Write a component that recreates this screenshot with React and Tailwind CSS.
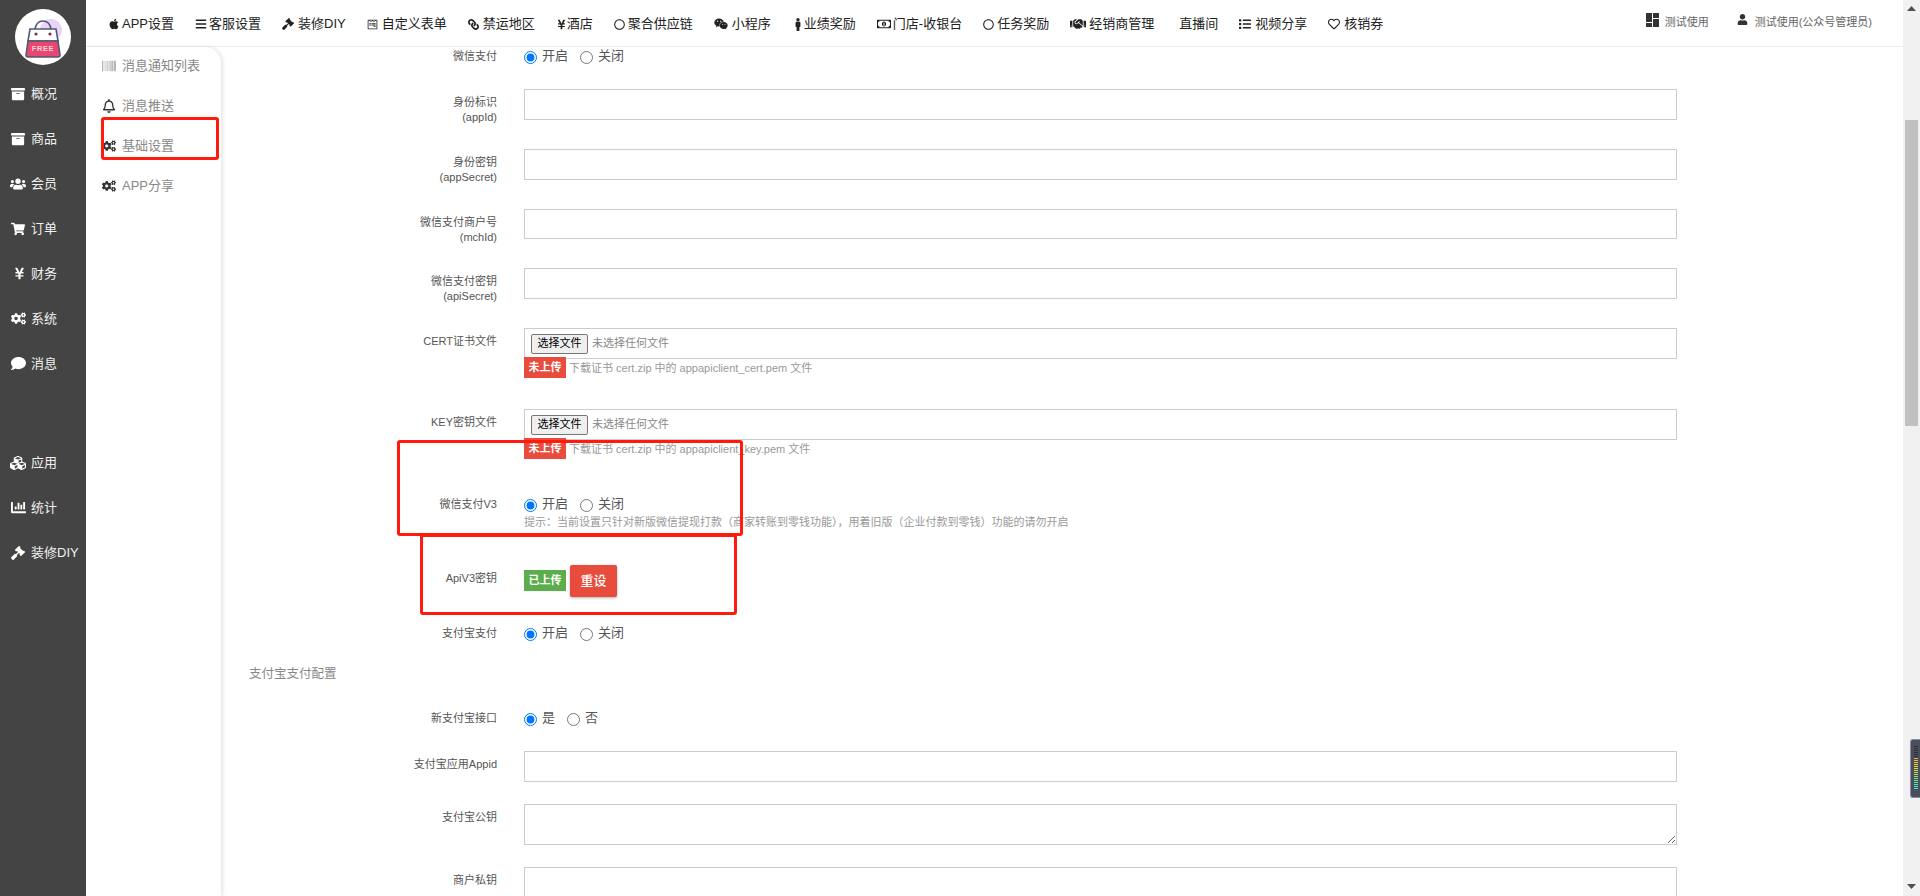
import React from "react";
import {
  FaApple, FaBars, FaGavel, FaWpforms, FaLink, FaYenSign, FaRegCircle, FaWeixin, FaMale,
  FaRegMoneyBillAlt, FaHandshake, FaList, FaRegHeart, FaUser, FaArchive, FaUsers,
  FaShoppingCart, FaCogs, FaComment, FaCubes, FaChartBar, FaBarcode, FaRegBell,
} from "react-icons/fa";

const topMenu = [
  { icon: FaApple, box: "w-[14px]", size: 12, label: "APP设置" },
  { icon: FaBars, box: "w-[14px]", size: 12, label: "客服设置" },
  { icon: FaGavel, box: "w-[16px]", size: 12, label: "装修DIY" },
  { icon: FaWpforms, box: "w-[15px]", size: 11, label: "自定义表单" },
  { icon: FaLink, box: "w-[15px]", size: 11, flip: true, label: "禁运地区" },
  { icon: FaYenSign, box: "w-[11px]", size: 11, label: "酒店" },
  { icon: FaRegCircle, box: "w-[14px]", size: 11, label: "聚合供应链" },
  { icon: FaWeixin, box: "w-[18px]", size: 14, label: "小程序" },
  { icon: FaMale, box: "w-[12px]", size: 13, label: "业绩奖励" },
  { icon: FaRegMoneyBillAlt, box: "w-[16px]", size: 14, label: "门店-收银台" },
  { icon: FaRegCircle, box: "w-[14px]", size: 11, label: "任务奖励" },
  { icon: FaHandshake, box: "w-[19px]", size: 16, label: "经销商管理" },
  { box: "w-[4px]", label: "直播间" },
  { icon: FaList, box: "w-[16px]", size: 12, label: "视频分享" },
  { icon: FaRegHeart, box: "w-[16px]", size: 12, label: "核销券" },
];

const sideMenu = [
  { icon: FaArchive, size: 14, label: "概况" },
  { icon: FaArchive, size: 14, label: "商品" },
  { icon: FaUsers, size: 16, shift: "-ml-px", label: "会员" },
  { icon: FaShoppingCart, size: 14, label: "订单" },
  { icon: FaYenSign, size: 13, shift: "ml-[2px]", label: "财务" },
  { icon: FaCogs, size: 15, label: "系统" },
  { icon: FaComment, size: 15, label: "消息" },
];

const sideMenu2 = [
  { icon: FaCubes, size: 16, shift: "-ml-px", label: "应用" },
  { icon: FaChartBar, size: 15, label: "统计" },
  { icon: FaGavel, size: 14, label: "装修DIY" },
];

const subMenu = [
  { icon: FaBarcode, label: "消息通知列表", tone: "text-[#999]" },
  { icon: FaRegBell, label: "消息推送", tone: "text-[#333]" },
  { icon: FaCogs, label: "基础设置", tone: "text-[#333]" },
  { icon: FaCogs, label: "APP分享", tone: "text-[#333]" },
];

const ledColors = [
  "#2e3038", "#2e3038", "#2e3038", "#2e3038", "#2e3038", "#2e3038",
  "#f5a623", "#f5b52a", "#f5c52f", "#eed636", "#e6df3a", "#d8e33f", "#c6e547", "#b4e650",
  "#9ae85f", "#86e96f", "#74ea80", "#62eb92", "#55eba4", "#4aebb4", "#42ebc4", "#3cebd0",
];

const Logo = () => (
  <div className="w-[56px] h-[56px] rounded-full bg-white overflow-hidden">
    <svg width="56" height="56" viewBox="0 0 56 56">
      <circle cx="36" cy="21" r="11" fill="#ecd3f8" />
      <path d="M20 21 C20 9 36 9 36 21" fill="none" stroke="#4d5a75" strokeWidth="1.6" />
      <path d="M15 20 H41 L43 32 H13 Z" fill="#fff" stroke="#4d5a75" strokeWidth="1.6" />
      <path d="M13 32 H43 L45 46 Q45 48 43 48 H13 Q11 48 11 46 Z" fill="#e8476f" stroke="#4d5a75" strokeWidth="1.6" />
      <circle cx="21" cy="25" r="1.6" fill="#7a3350" />
      <circle cx="35" cy="25" r="1.6" fill="#7a3350" />
      <text x="28" y="42" textAnchor="middle" fontSize="7.5" fontWeight="700" fill="#fbd5df" letterSpacing="0.6">FREE</text>
    </svg>
  </div>
);

const SideItem = ({ item }) => {
  const Icon = item.icon;
  return (
    <div className="h-[45px] flex items-center pl-[11px] text-[13px] text-[#f0f0f0]">
      <span className="w-[20px] flex shrink-0 text-white">
        <Icon size={item.size} className={item.shift} />
      </span>
      <span className="whitespace-nowrap">{item.label}</span>
    </div>
  );
};

const Row = ({ h, label, label2, children }) => (
  <div className={`flex ${h}`}>
    <div className="w-[276px] shrink-0 pt-[6px] text-right text-[11px] leading-[15px] text-[#555]">
      <div>{label}</div>
      {label2 && <div>{label2}</div>}
    </div>
    <div className="ml-[27px] w-[1153px]">{children}</div>
  </div>
);

const TextBox = ({ h = "h-[31px]" }) => (
  <input type="text" className={`block w-full ${h} border border-[#ccc] bg-white`} />
);

const Radios = ({ name, on = "开启", off = "关闭", gap = "ml-[12px]" }) => (
  <div className="flex items-center h-[20px] text-[13px] text-[#555]">
    <input type="radio" name={name} defaultChecked className="w-[13px] h-[13px] m-0" />
    <span className="ml-[5px] mb-[3px]">{on}</span>
    <input type="radio" name={name} className={`w-[13px] h-[13px] ${gap}`} />
    <span className="ml-[5px] mb-[3px]">{off}</span>
  </div>
);

const RadioRow = ({ h, label, name, on, off, gap, children }) => (
  <div className={`flex ${h}`}>
    <div className="w-[276px] shrink-0 pt-[2px] text-right text-[11px] leading-[15px] text-[#555]">{label}</div>
    <div className="ml-[27px] w-[1153px]">
      <Radios name={name} on={on} off={off} gap={gap} />
      {children}
    </div>
  </div>
);

const FileBox = ({ hint }) => (
  <div>
    <div className="h-[31px] border border-[#ccc] flex items-center pl-[6px]">
      <button className="h-[20px] w-[57px] border border-[#767676] rounded-[2px] bg-[#efefef] text-[11px] text-black">选择文件</button>
      <span className="ml-[4px] text-[11px] text-[#888]">未选择任何文件</span>
    </div>
    <div className="flex items-center -mt-[2px]">
      <span className="w-[42px] h-[21px] flex items-center justify-center bg-[#e74c3c] text-white text-[11px] font-bold">未上传</span>
      <span className="ml-[3px] mt-px text-[11px] text-[#999]">{hint}</span>
    </div>
  </div>
);

const RedBox = ({ className }) => (
  <div className={`absolute border-[3px] border-[#ff1a0e] rounded-[3px] pointer-events-none ${className}`} />
);

export default function App() {
  return (
    <div className="relative flex h-[896px] w-[1920px] overflow-hidden bg-white font-['Liberation_Sans','Noto_Sans_CJK_SC',sans-serif]">
      {/* dark left column */}
      <aside className="w-[86px] shrink-0 bg-[#444]">
        <div className="h-[71px] pt-[9px] pl-[15px]">
          <Logo />
        </div>
        {sideMenu.map((item) => <SideItem key={item.label} item={item} />)}
        <div className="h-[54px]" />
        {sideMenu2.map((item) => <SideItem key={item.label} item={item} />)}
      </aside>

      <div className="flex-1 flex flex-col min-w-0">
        {/* top bar */}
        <header className="h-[47px] shrink-0 flex border-b border-[#eee] pl-[22px] pr-[31px]">
          <nav className="flex items-center gap-[21px] pt-[2px] text-[13px] text-[#222]">
            {topMenu.map((item) => {
              const Icon = item.icon;
              return (
                <div key={item.label} className="flex items-center whitespace-nowrap">
                  <span className={`flex shrink-0 ${item.box}`}>
                    {Icon && <Icon size={item.size} className={item.flip ? "-scale-x-100" : ""} />}
                  </span>
                  {item.label}
                </div>
              );
            })}
          </nav>
          <div className="ml-auto flex gap-[28px] pt-[13px] text-[11px] leading-[18px] text-[#666]">
            <div className="flex gap-[6px]">
              <svg width="13" height="14" viewBox="0 0 13 14" fill="#333">
                <rect x="0" y="0" width="6" height="9" />
                <rect x="7" y="0" width="6" height="5" />
                <rect x="7" y="6" width="6" height="8" />
                <rect x="0" y="10" width="6" height="4" />
              </svg>
              <span>测试使用</span>
            </div>
            <div className="flex gap-[7px]">
              <FaUser size={11} className="text-[#333] mt-px" />
              <span>测试使用(公众号管理员)</span>
            </div>
          </div>
        </header>

        <div className="flex-1 flex min-h-0">
          {/* sub menu */}
          <div className="w-[135px] shrink-0 rounded-tr-2xl bg-white shadow-[2px_0_4px_rgba(0,0,0,0.1)] pl-[16px]">
            <div className="-mt-px">
              {subMenu.map((item) => {
                const Icon = item.icon;
                return (
                  <div key={item.label} className="h-[40px] flex items-center text-[13px] text-[#888]">
                    <span className={`w-[20px] flex shrink-0 ${item.tone}`}>
                      <Icon size={14} />
                    </span>
                    {item.label}
                  </div>
                );
              })}
            </div>
          </div>

          {/* form */}
          <main className="flex-1 min-w-0 overflow-hidden">
            <RadioRow h="h-[42px]" label="微信支付" name="wx" />
            <Row h="h-[60px]" label="身份标识" label2="(appId)"><TextBox /></Row>
            <Row h="h-[60px]" label="身份密钥" label2="(appSecret)"><TextBox /></Row>
            <Row h="h-[59px]" label="微信支付商户号" label2="(mchId)"><TextBox h="h-[30px]" /></Row>
            <Row h="h-[60px]" label="微信支付密钥" label2="(apiSecret)"><TextBox /></Row>
            <Row h="h-[81px]" label="CERT证书文件"><FileBox hint="下载证书 cert.zip 中的 appapiclient_cert.pem 文件" /></Row>
            <Row h="h-[86px]" label="KEY密钥文件"><FileBox hint="下载证书 cert.zip 中的 appapiclient_key.pem 文件" /></Row>
            <RadioRow h="h-[70px]" label="微信支付V3" name="v3">
              <div className="text-[11px] leading-[15px] text-[#999]">提示：当前设置只针对新版微信提现打款（商家转账到零钱功能），用着旧版（企业付款到零钱）功能的请勿开启</div>
            </RadioRow>
            <div className="flex h-[59px]">
              <div className="w-[276px] shrink-0 pt-[6px] text-right text-[11px] leading-[15px] text-[#555]">ApiV3密钥</div>
              <div className="ml-[27px] flex items-start">
                <span className="mt-[5px] w-[42px] h-[21px] flex items-center justify-center bg-[#5cae4c] text-white text-[11px] font-bold">已上传</span>
                <button className="ml-[4px] w-[47px] h-[32px] rounded-[2px] bg-[#e74c3c] text-white text-[13px] font-medium shadow-[0_1px_3px_rgba(0,0,0,0.3)]">重设</button>
              </div>
            </div>
            <RadioRow h="h-[40px]" label="支付宝支付" name="ali" />
            <div className="h-[45px] pl-[28px] text-[12.5px] leading-[20px] text-[#888]">支付宝支付配置</div>
            <RadioRow h="h-[42px]" label="新支付宝接口" name="newali" on="是" off="否" gap="ml-[12px]" />
            <Row h="h-[53px]" label="支付宝应用Appid"><TextBox /></Row>
            <Row h="h-[63px]" label="支付宝公钥">
              <textarea className="block w-full h-[41px] border border-[#ccc]" />
            </Row>
            <Row h="h-[60px]" label="商户私钥">
              <textarea className="block w-full h-[60px] border border-[#ccc]" />
            </Row>
          </main>
        </div>
      </div>

      {/* page scrollbar */}
      <div className="w-[17px] shrink-0 bg-[#f1f1f1] flex flex-col items-center">
        <svg className="mt-[6px] shrink-0" width="9" height="5" viewBox="0 0 9 5" fill="#505050"><path d="M4.5 0 L9 5 H0 Z" /></svg>
        <div className="mt-[109px] w-[13px] h-[306px] bg-[#c1c1c1] shrink-0" />
        <svg className="mt-auto mb-[7px] shrink-0" width="9" height="5" viewBox="0 0 9 5" fill="#505050"><path d="M0 0 H9 L4.5 5 Z" /></svg>
      </div>

      {/* annotation frames drawn over the screenshot */}
      <RedBox className="left-[101px] top-[117px] w-[118px] h-[43px]" />
      <RedBox className="left-[397px] top-[440px] w-[346px] h-[96px]" />
      <RedBox className="left-[420px] top-[534px] w-[317px] h-[81px]" />

      {/* floating meter widget */}
      <div className="absolute left-[1910px] top-[739px] w-[10px] h-[59px] bg-[#4a4e5c] rounded-l-[3px] border border-[#888ca0] border-r-0 flex flex-col items-end pr-[2px] pt-[6px]">
        {ledColors.map((c, i) => (
          <div key={i} className="w-[4px] h-px mb-px shrink-0" style={{ backgroundColor: c }} />
        ))}
      </div>
    </div>
  );
}
